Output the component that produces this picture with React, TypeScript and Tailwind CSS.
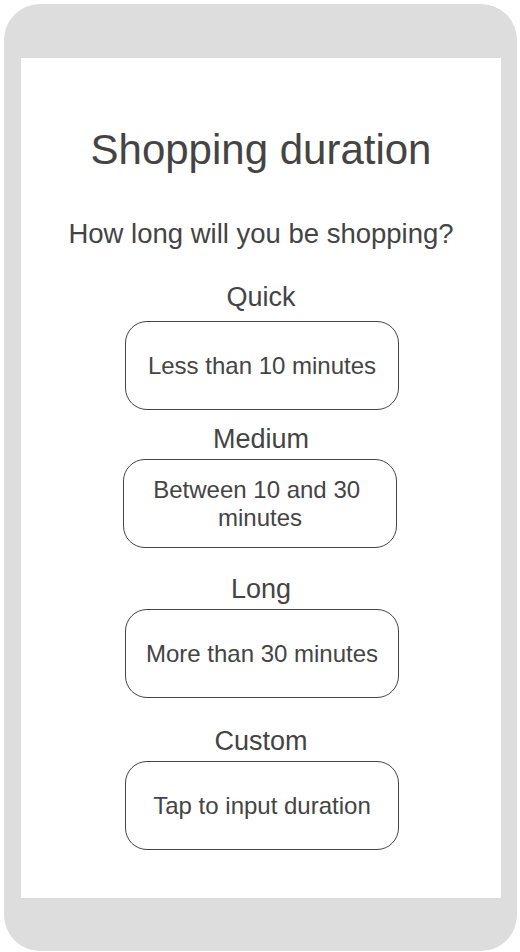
import React from "react";

const font = { fontFamily: '"Liberation Sans", Arial, sans-serif' };

const boxCls =
  "w-[274px] h-[89px] border border-[#444444] rounded-[22px] flex items-center justify-center text-[24px] leading-[28px] text-center";
const labelCls = "h-[32px] text-[27px] leading-[32px]";

export default function App() {
  return (
    <div className="w-[520px] h-[952px] bg-white pt-[4px] pl-[4px] pr-[3px] pb-[1px]" style={font}>
      <div className="h-full bg-[#dddddd] rounded-[36px] pt-[54px] pb-[53px] pl-[17px] pr-[16px]">
        <div className="h-[840px] bg-white flex flex-col items-center text-[#444444]">
          <div className="mt-[68px] h-[48px] text-[42px] leading-[48px]">Shopping duration</div>
          <div className={`mt-[44px] h-[32px] text-[27.5px] leading-[32px]`}>How long will you be shopping?</div>

          <div className={`mt-[31px] ${labelCls}`}>Quick</div>
          <div className={`mt-[8px] ml-[2px] ${boxCls}`}>Less than 10 minutes</div>

          <div className={`mt-[13px] ${labelCls}`}>Medium</div>
          <div className={`mt-[4px] mr-[2px] ${boxCls}`}>
            <span>
              {"Between 10 and 30\u00a0"}
              <br />
              minutes
            </span>
          </div>

          <div className={`mt-[25px] ${labelCls}`}>Long</div>
          <div className={`mt-[4px] ml-[2px] ${boxCls}`}>More than 30 minutes</div>

          <div className={`mt-[27px] ${labelCls}`}>Custom</div>
          <div className={`mt-[4px] ml-[2px] ${boxCls}`}>Tap to input duration</div>
        </div>
      </div>
    </div>
  );
}
